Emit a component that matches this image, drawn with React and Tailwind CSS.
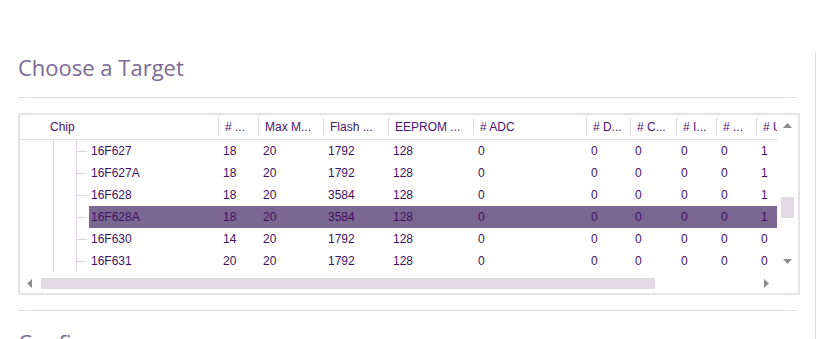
const cols = [
  { label: 'Chip', w: 198 },
  { label: '# ...', w: 40 },
  { label: 'Max M...', w: 65 },
  { label: 'Flash ...', w: 65 },
  { label: 'EEPROM ...', w: 85 },
  { label: '# ADC', w: 113 },
  { label: '# D...', w: 44 },
  { label: '# C...', w: 46 },
  { label: '# I...', w: 40 },
  { label: '# ...', w: 40 },
  { label: '# USB', w: 60 },
];

const rows = [
  ['16F627', '18', '20', '1792', '128', '0', '0', '0', '0', '0', '1'],
  ['16F627A', '18', '20', '1792', '128', '0', '0', '0', '0', '0', '1'],
  ['16F628', '18', '20', '3584', '128', '0', '0', '0', '0', '0', '1'],
  ['16F628A', '18', '20', '3584', '128', '0', '0', '0', '0', '0', '1'],
  ['16F630', '14', '20', '1792', '128', '0', '0', '0', '0', '0', '0'],
  ['16F631', '20', '20', '1792', '128', '0', '0', '0', '0', '0', '0'],
];

const SELECTED = 3;

function Arrow({ dir }) {
  const pts = {
    up: '0,5 4.5,0 9,5',
    down: '0,0 9,0 4.5,5',
    left: '5,0 5,9 0,4.5',
    right: '0,0 0,9 5,4.5',
  }[dir];
  const vert = dir === 'up' || dir === 'down';
  return (
    <svg width={vert ? 9 : 5} height={vert ? 5 : 9} viewBox={vert ? '0 0 9 5' : '0 0 5 9'}>
      <polygon points={pts} fill="#8c8c8c" />
    </svg>
  );
}

function Header() {
  return (
    <div className="flex h-[25px] border-b border-[#e3dde3] shrink-0">
      {cols.map((c, i) => (
        <div key={i} className="flex items-center shrink-0" style={{ width: c.w }}>
          {i === 0 ? (
            <span className="pl-[30px] text-[#4a1470]">{c.label}</span>
          ) : (
            <>
              <span className="w-px h-[18px] bg-[#e3dde3] shrink-0" />
              <span className="pl-[6px] whitespace-nowrap text-[#4a1470]">{c.label}</span>
            </>
          )}
        </div>
      ))}
    </div>
  );
}

function Row({ data, selected }) {
  return (
    <div className="flex h-[22px] shrink-0">
      <div className="flex w-[69px] shrink-0">
        <div className="w-[33px]" />
        <div className="w-[23px] border-l border-[#ddd5dd]" />
        <div className="w-[13px] border-l border-[#ddd5dd] flex items-center">
          <div className="w-[10px] h-px bg-[#ddd5dd]" />
        </div>
      </div>
      <div className={`flex flex-1 items-center ${selected ? 'bg-[#7a6892]' : ''}`}>
        {data.map((v, i) => (
          <div
            key={i}
            className={`shrink-0 whitespace-nowrap text-[#3e1160] ${i === 0 ? 'pl-[2px]' : 'pl-[5px]'}`}
            style={{ width: i === 0 ? cols[0].w - 69 : cols[i].w }}
          >
            {v}
          </div>
        ))}
      </div>
    </div>
  );
}

export default function App() {
  return (
    <div className="w-[817px] h-[339px] overflow-hidden bg-white">
      <div className="mt-[52px] w-[816px] h-[287px] border-r border-[#e2dde2] pl-[18px] overflow-hidden">
        <div className="h-[46px] w-[779px] border-b border-[#e3dde3]">
          <h1 className="text-[22px] leading-[30px] text-[#7a6a94]" style={{ fontFamily: '"Open Sans", sans-serif' }}>
            Choose a Target
          </h1>
        </div>

        <div
          className="mt-[15px] w-[782px] h-[182px] border-2 border-[#e6e2e6] flex flex-col text-[12px]"
          style={{ fontFamily: '"Liberation Sans", Arial, sans-serif' }}
        >
          <div className="flex h-[159px]">
            <div className="w-[757px] overflow-hidden flex flex-col">
              <Header />
              {rows.map((r, i) => (
                <Row key={i} data={r} selected={i === SELECTED} />
              ))}
            </div>
            <div className="w-[21px] flex flex-col items-center">
              <div className="h-[20px] flex items-center justify-center">
                <Arrow dir="up" />
              </div>
              <div className="h-[62px]" />
              <div className="w-[13px] h-[21px] bg-[#e3dbe3]" />
              <div className="flex-1" />
              <div className="h-[20px] mb-[3px] flex items-center justify-center">
                <Arrow dir="down" />
              </div>
            </div>
          </div>
          <div className="flex items-center h-[19px]">
            <div className="w-[18px] flex justify-center">
              <Arrow dir="left" />
            </div>
            <div className="w-[3px]" />
            <div className="w-[614px] h-[11px] bg-[#e3dbe3]" />
            <div className="flex-1" />
            <div className="w-[18px] flex justify-center">
              <Arrow dir="right" />
            </div>
            <div className="w-[23px]" />
          </div>
        </div>

        <div className="mt-[15px] w-[779px] border-t border-[#e3dde3]" />
        <h2 className="mt-[16px] text-[22px] leading-[30px] text-[#7a6a94]" style={{ fontFamily: '"Open Sans", sans-serif' }}>
          Configure
        </h2>
      </div>
    </div>
  );
}
